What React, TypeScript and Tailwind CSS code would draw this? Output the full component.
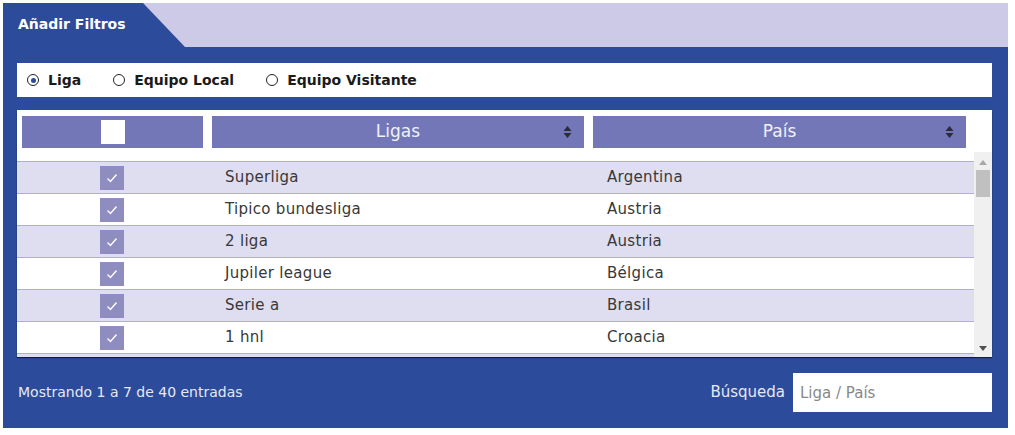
import { useState } from 'react';

const rows = [
  { liga: 'Superliga', pais: 'Argentina' },
  { liga: 'Tipico bundesliga', pais: 'Austria' },
  { liga: '2 liga', pais: 'Austria' },
  { liga: 'Jupiler league', pais: 'Bélgica' },
  { liga: 'Serie a', pais: 'Brasil' },
  { liga: '1 hnl', pais: 'Croacia' },
  { liga: 'Primera división', pais: 'Chile' },
];

function SortIcon() {
  return (
    <svg width="9" height="14" viewBox="0 0 9 14" className="absolute right-3 top-1/2 -translate-y-1/2">
      <path d="M4.5 1 L8.5 6 L0.5 6 Z" fill="#2a2a3a" />
      <path d="M4.5 13 L8.5 8 L0.5 8 Z" fill="#2a2a3a" />
    </svg>
  );
}

function Check() {
  return (
    <div className="w-6 h-6 bg-[#8f8cc0] flex items-center justify-center">
      <svg width="14" height="14" viewBox="0 0 14 14">
        <path d="M2.5 7.5 L5.5 10.5 L11.5 3.5" fill="none" stroke="#fff" strokeWidth="1.4" />
      </svg>
    </div>
  );
}

function Radio({ label, checked }: { label: string; checked?: boolean }) {
  return (
    <label className="flex items-center gap-[9px]">
      <span className="w-[12px] h-[12px] rounded-full border-[1.5px] border-[#222] flex items-center justify-center">
        {checked && <span className="w-[5px] h-[5px] rounded-full bg-[#2c4b9b]" />}
      </span>
      <span className="font-bold text-[14px] text-[#1a1a1a]">{label}</span>
    </label>
  );
}

export default function App() {
  const [query, setQuery] = useState('');

  return (
    <div className="w-[1015px] h-[435px] bg-white pt-[3px] pl-[3px]" style={{ fontFamily: '"DejaVu Sans", "Liberation Sans", sans-serif' }}>
      <div className="w-[1005px] h-[425px] bg-[#2c4b9b] flex flex-col">
        {/* Tab strip */}
        <div className="relative h-[44px] bg-[#cccae6]">
          <div className="absolute left-0 top-0 h-[44px] w-[182px] bg-[#2c4b9b] [clip-path:polygon(0_0,140px_0,182px_100%,0_100%)]" />
          <div className="relative h-full flex items-center pl-[15px] pb-[2px] text-white font-bold text-[14px]">
            Añadir Filtros
          </div>
        </div>

        <div className="pl-[14px] pr-[16px] pt-[16px] flex flex-col">
          {/* Radios */}
          <div className="h-[34px] bg-white flex items-center gap-[32px] pl-[10px]">
            <Radio label="Liga" checked />
            <Radio label="Equipo Local" />
            <Radio label="Equipo Visitante" />
          </div>

          {/* Table */}
          <div className="mt-[13px] bg-white h-[247px] shadow-[0_1px_1px_rgba(0,0,0,0.6)] flex flex-col">
            <div className="flex gap-[9px] pl-[5px] pt-[6px] pb-[13px]">
              <div className="w-[181px] h-[32px] bg-[#7377b8] flex items-center justify-center">
                <div className="w-6 h-6 bg-white" />
              </div>
              <div className="relative w-[372px] h-[32px] bg-[#7377b8] flex items-center justify-center text-[#f0f0f8] text-[17px]">
                Ligas
                <SortIcon />
              </div>
              <div className="relative w-[373px] h-[32px] bg-[#7377b8] flex items-center justify-center text-[#f0f0f8] text-[17px]">
                País
                <SortIcon />
              </div>
            </div>
            <div className="flex flex-1 min-h-0">
              <div className="flex-1 overflow-hidden">
                {rows.map((r, i) => (
                  <div
                    key={i}
                    className={`h-[32px] flex items-center border-t border-[#b0aed9] text-[15px] tracking-[0.3px] text-[#383838] ${i % 2 === 0 ? 'bg-[#dfdef0]' : 'bg-white'}`}
                  >
                    <div className="w-[190px] flex justify-center">
                      <Check />
                    </div>
                    <div className="w-[382px] pl-[18px]">{r.liga}</div>
                    <div className="pl-[18px]">{r.pais}</div>
                  </div>
                ))}
              </div>
              <div className="w-[18px] bg-[#f0f0f0] flex flex-col items-center mt-[-9px] relative">
                <svg width="8" height="5" viewBox="0 0 8 5" className="mt-[8px]">
                  <path d="M4 0 L8 5 L0 5 Z" fill="#a8a8a8" />
                </svg>
                <div className="w-[14px] h-[27px] bg-[#c0c0c0] mt-[5px]" />
                <div className="flex-1" />
                <svg width="8" height="5" viewBox="0 0 8 5" className="mb-[6px]">
                  <path d="M4 5 L8 0 L0 0 Z" fill="#505050" />
                </svg>
              </div>
            </div>
          </div>

          {/* Footer */}
          <div className="mt-[16px] flex items-center justify-between pl-[1px]">
            <span className="text-[14px] text-[#e6e8f4]">Mostrando 1 a 7 de 40 entradas</span>
            <div className="flex items-center gap-[8px]">
              <span className="text-[15px] text-[#e6e8f4]">Búsqueda</span>
              <input
                value={query}
                onChange={(e) => setQuery(e.target.value)}
                placeholder="Liga / País"
                className="w-[199px] h-[39px] bg-white px-[7px] text-[15px] text-[#333] placeholder:text-[#888] outline-none"
              />
            </div>
          </div>
        </div>
      </div>
    </div>
  );
}
